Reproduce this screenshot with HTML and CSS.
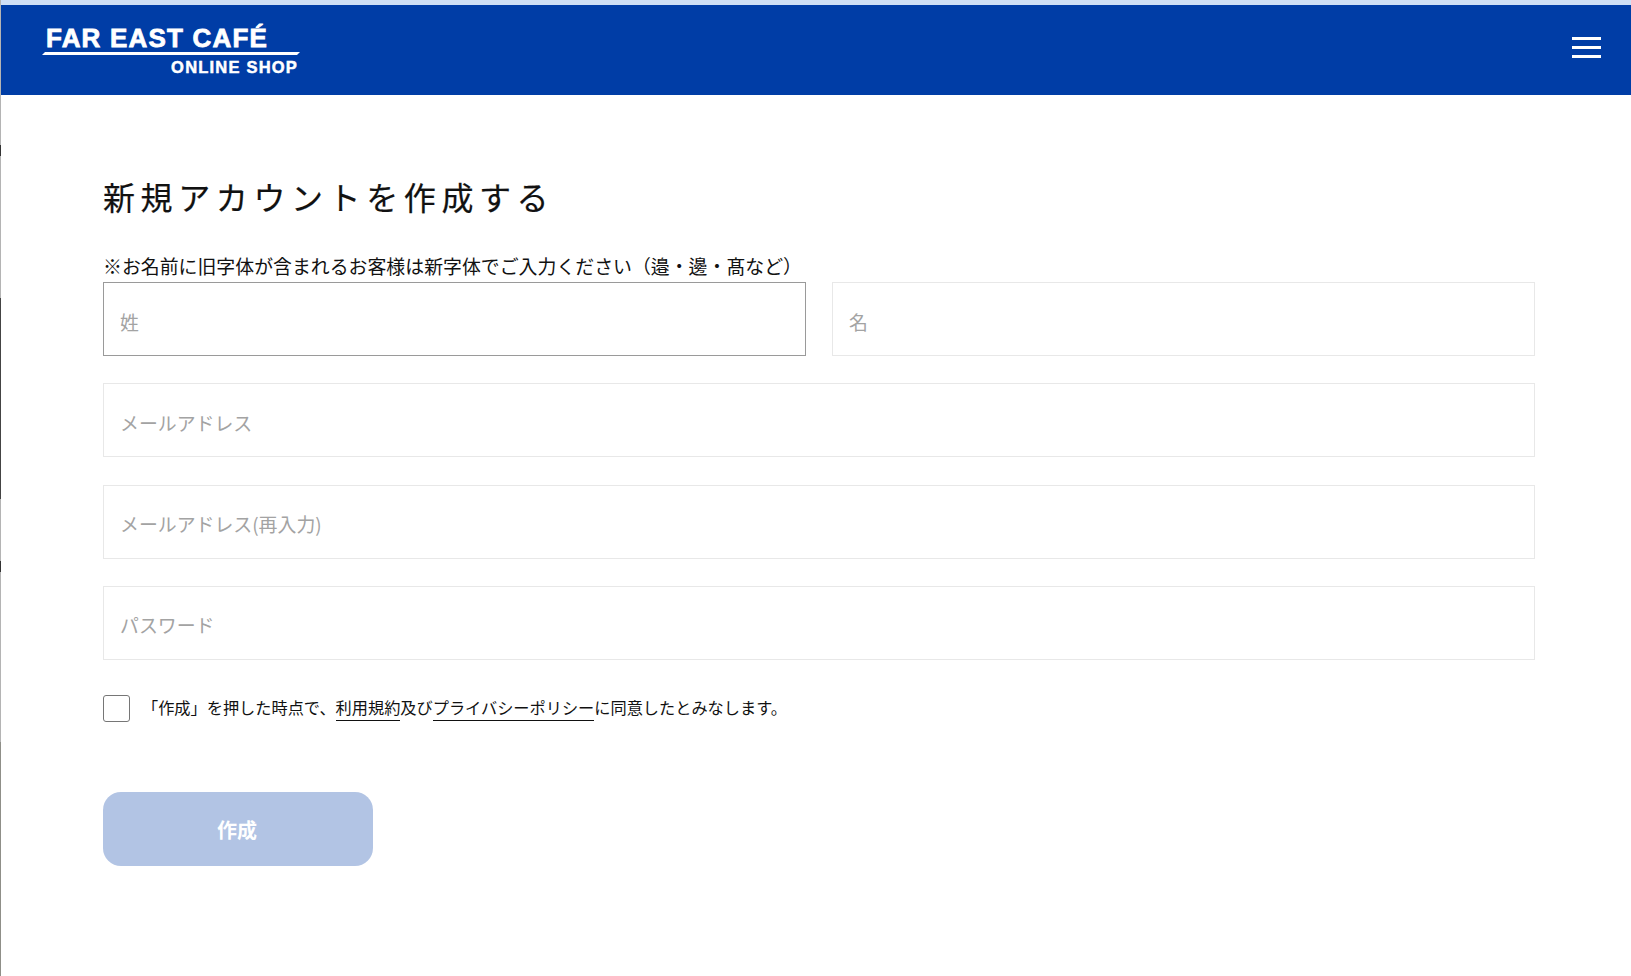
FILE: index.html
```html
<!DOCTYPE html>
<html lang="ja">
<head>
<meta charset="utf-8">
<title>新規アカウントを作成する</title>
<link rel="stylesheet" href="styles.css">
</head>
<body>
<div class="edge"></div>
<div class="page">
  <div class="topline"></div>
  <header class="header">
    <a class="logo" href="#">
      <span class="logo-main">FAR EAST CAFÉ</span>
      <svg class="logo-rule" width="258" height="4" viewBox="0 0 258 4"><polygon points="3,0 258,0 255,3 0,3" fill="#fff"/></svg>
      <span class="logo-sub">ONLINE SHOP</span>
    </a>
    <button class="menu" type="button" aria-label="メニュー"><span></span><span></span><span></span></button>
  </header>
  <main class="main">
    <h1 class="title">新規アカウントを作成する</h1>
    <p class="note">※お名前に旧字体が含まれるお客様は新字体でご入力ください（邉・邊・髙など）</p>
    <form class="form">
      <div class="name-row">
        <input class="field field-active" type="text" placeholder="姓">
        <input class="field" type="text" placeholder="名">
      </div>
      <input class="field" type="email" placeholder="メールアドレス">
      <input class="field" type="email" placeholder="メールアドレス(再入力)">
      <input class="field" type="password" placeholder="パスワード">
      <label class="agree">
        <span class="check"></span>
        <span class="agree-text">「作成」を押した時点で、<a href="#">利用規約</a>及び<a href="#">プライバシーポリシー</a>に同意したとみなします。</span>
      </label>
      <button class="submit" type="button">作成</button>
    </form>
  </main>
</div>
</body>
</html>
```
FILE: styles.css
```css
* { box-sizing: border-box; }
html, body { margin: 0; height: 100%; }
body {
  display: flex;
  background: #fff;
  color: #111;
  font-family: "Noto Sans CJK JP", "Noto Sans", sans-serif;
  overflow: hidden;
}
.edge {
  width: 1px;
  flex: none;
  background: linear-gradient(to bottom,
    #b4b4b4 0, #b4b4b4 145px, #333 145px, #333 156px, #b4b4b4 156px,
    #b4b4b4 298px, #444 298px, #444 499px, #b4b4b4 499px,
    #b4b4b4 561px, #333 561px, #333 572px, #b4b4b4 572px,
    #b4b4b4 742px, #8f8f88 742px, #8f8f88 976px);
}
.page { flex: 1; min-width: 0; }
.topline { height: 5px; background: #cfdff5; }
.header {
  height: 90px;
  background: #003da6;
  display: flex;
  align-items: flex-start;
  justify-content: space-between;
  padding: 0 30px 0 41px;
}
.logo {
  display: flex;
  flex-direction: column;
  width: 258px;
  padding-top: 20px;
  color: #fff;
  text-decoration: none;
  font-family: "Liberation Sans", Arial, sans-serif;
  font-weight: 700;
}
.logo-main {
  font-size: 26px;
  line-height: 26px;
  letter-spacing: 1.2px;
  padding-left: 4px;
  -webkit-text-stroke: 0.8px #fff;
}
.logo-rule { display: block; margin-top: 1px; }
.logo-sub {
  font-size: 16.5px;
  line-height: 18px;
  letter-spacing: 1.2px;
  margin-top: 2px;
  text-align: right;
  padding-right: 2px;
  -webkit-text-stroke: 0.5px #fff;
}
.menu {
  width: 29px;
  margin-top: 32px;
  padding: 0;
  border: 0;
  background: none;
  display: flex;
  flex-direction: column;
  gap: 6px;
}
.menu span { display: block; height: 3px; background: #fff; }
.main { padding: 76px 96px 0 102px; }
.title {
  margin: 0;
  font-size: 32px;
  line-height: 50px;
  font-weight: 400;
  letter-spacing: 5.6px;
  color: #111;
  -webkit-text-stroke: 0.2px #111;
}
.note {
  margin: 31px 0 0;
  font-size: 18.9px;
  line-height: 28px;
  color: #111;
}
.form {
  display: flex;
  flex-direction: column;
  gap: 27.33px;
  margin-top: 2px;
}
.name-row { display: flex; gap: 26px; }
.field {
  display: block;
  width: 100%;
  min-width: 0;
  height: 74px;
  padding: 4px 16px 0;
  border: 1px solid #e8e8e8;
  border-radius: 0;
  background: #fff;
  outline: 0;
  font: 18.9px "Noto Sans CJK JP", "Noto Sans", sans-serif;
  color: #111;
}
.field::placeholder { color: #a3a3a3; opacity: 1; }
.field-active { border-color: #9a9a9a; }
.agree {
  display: flex;
  align-items: center;
  gap: 12px;
  margin-top: 8px;
}
.check {
  width: 27px;
  height: 27px;
  flex: none;
  border: 1px solid #767676;
  border-radius: 3px;
  background: #fff;
}
.agree-text {
  font-size: 16.2px;
  line-height: 24px;
  color: #111;
  position: relative;
  top: -2px;
}
.agree-text a {
  color: inherit;
  text-decoration: none;
  border-bottom: 1px solid #111;
  padding-bottom: 1px;
}
.submit {
  width: 270px;
  height: 74px;
  margin-top: 42px;
  padding: 2px 8px 0 6px;
  border: 0;
  border-radius: 18px;
  background: #b2c4e4;
  color: #fff;
  font: 700 20px "Noto Sans CJK JP", "Noto Sans", sans-serif;
}
```
